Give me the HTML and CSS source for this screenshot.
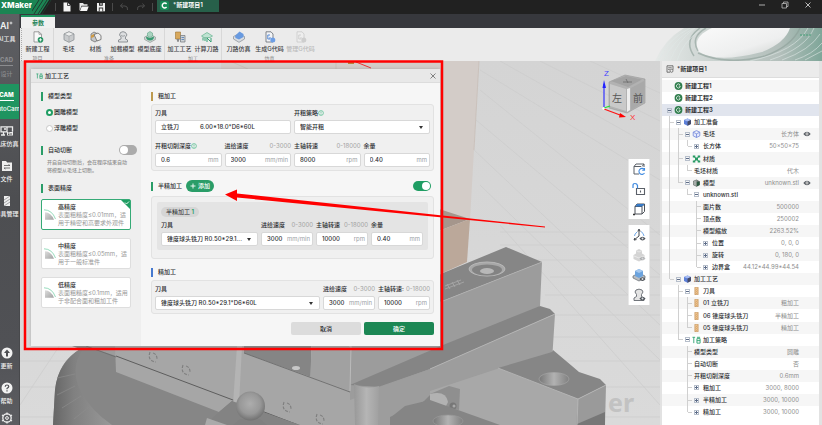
FILE: index.html
```html
<!DOCTYPE html>
<html lang="zh-CN">
<head>
<meta charset="utf-8">
<title>XMaker</title>
<link rel="stylesheet" href="styles.css">
</head>
<body>
<svg class="defs" aria-hidden="true">
  <symbol id="cube" viewBox="0 0 12 12"><path d="M6 .8 11 3v5.8L6 11.3 1 8.800V3z" fill="#c9cbcd" stroke="#8c9094" stroke-width=".8"/><path d="M6 .8 11 3 6 5.200 1 3z" fill="#eceded" stroke="#8c9094" stroke-width=".6"/><path d="M6 5.200v6" stroke="#9a9da0" stroke-width=".6"/></symbol>
  <symbol id="gproj" viewBox="0 0 8 8"><circle cx="4" cy="4" r="3.900" fill="#2f7d4c"/><path d="M5.600 2.900A2 2 0 1 0 5.600 5.100V4H4.200" fill="none" stroke="#e8f4ec" stroke-width=".8"/></symbol>
  <symbol id="bluecube" viewBox="0 0 8 8"><path d="M4 .5 7.500 2v4L4 7.800.5 6V2z" fill="#5c7fd8"/><path d="M4 .5 7.500 2 4 3.500.5 2z" fill="#a9bdf2"/><path d="M4 3.500 7.500 2v4L4 7.800z" fill="#454a66"/></symbol>
  <symbol id="wirecube" viewBox="0 0 8 8"><path d="M4 .6 7.300 2.200v3.700L4 7.500.7 5.900V2.200zM.7 2.200 4 3.800l3.300-1.600M4 3.800v3.700" fill="#e4e8fb" stroke="#7287db" stroke-width=".8"/></symbol>
  <symbol id="mat" viewBox="0 0 8 8"><path d="M.3.500h2.500v2H.3zM5.200.5h2.500v2H5.200zM.3 5.500h2.500v2H.3zM5.200 5.500h2.500v2H5.200zM2.500 2.500h3v3h-3z" fill="#279a63"/><path d="m1.500 1.500 5 5m0-5-5 5" stroke="#279a63"/></symbol>
  <symbol id="model" viewBox="0 0 8 8"><path d="M4 .5 7.500 2.500v3.500L4 7.800.5 6V2z" fill="#6d7471"/><path d="M4 3 7 2.500V6L4 7.500z" fill="#29583f"/><path d="M1 2.500 4 1v6L1 5.700z" fill="#a7adaa"/></symbol>
  <symbol id="tool" viewBox="0 0 8 8"><path d="M2.300.3h3.400v7.400H2.300z" fill="#eec38f" stroke="#b98345" stroke-width=".5"/><path d="m2.800 3.500 2.400-2m-2.400 4 2.400-2m-2.400 4 2.400-2" stroke="#c4935a" stroke-width=".5"/></symbol>
  <symbol id="strategy" viewBox="0 0 10 8"><path d="M.5 1h3M2 1v6.500M5.500 2.500h3.500v5H5.500zM5.500 4.700H9M5.500 1H9" fill="none" stroke="#2da371" stroke-width="1"/></symbol>
  <symbol id="eye" viewBox="0 0 8 6"><path d="M.3 3Q4-1.500 7.700 3 4 7.500.3 3z" fill="#555a60"/><circle cx="4" cy="3" r="1.400" fill="#fff"/><circle cx="4" cy="3" r=".7" fill="#333"/></symbol>
  <symbol id="badge-eye" viewBox="0 0 8 6"><path d="M.3 3Q4-1.500 7.700 3 4 7.500.3 3z" fill="#4d5258"/><circle cx="4" cy="3" r="1.200" fill="#dfe3e8"/></symbol>
  <symbol id="arc" viewBox="0 0 12 12"><path d="M1 3.200Q7 3.200 10 10.800H1z" fill="url(#arcfill)"/><path d="M0 .8Q8 .8 11.500 10" fill="none" stroke="#8ad7b4" stroke-width=".9"/></symbol>
  <symbol id="info" viewBox="0 0 6 6"><circle cx="3" cy="3" r="2.400" fill="none" stroke="#4dba8b" stroke-width=".7"/><path d="M3 1.500v2M3 4v.7" stroke="#4dba8b" stroke-width=".7"/></symbol>
  <defs>
    <linearGradient id="arcfill" x2="1" y2="1"><stop stop-color="#dedede"/><stop offset="1" stop-color="#a2a2a2"/></linearGradient>
  </defs>
</svg>

<div class="app">
  <header class="titlebar">
    <div class="brand"><span>XMaker</span>
      <svg viewBox="0 0 20 14"><path d="M0 0h17L8 14H0z" fill="#1b8553"/><path d="M7 0-2 14M11 0 2 14M15 0 6 14M19 0l-9 14" stroke="#1f3d30" stroke-width="1"/></svg>
    </div>
    <div class="quick">
      <button aria-label="新建"><svg viewBox="0 0 10 10"><path d="M1.500.5h4L8.500 3.500v6h-7z" fill="#f4f4f4"/><path d="M5.500.5v3h3" fill="none" stroke="#222" stroke-width=".8"/></svg></button>
      <button aria-label="打开"><svg viewBox="0 0 10 10"><path d="M.5 9V1h3.500l1 1.300h3.500v1.500h-6z" fill="#e8e8e8"/><path d="m2.700 4.600 7 0L8 9H1z" fill="#f6f6f6"/></svg></button>
      <button aria-label="保存"><svg viewBox="0 0 10 10"><path d="M1 1h8v8.300H1z" fill="#f0f0f0"/><path d="M3 1v2.700h3.800V1M2.800 9.300V5.600h4.400v3.700" fill="#333"/><path d="M4.500 1h1v2h-1zM3.700 6.500h2.600v2.800H3.700z" fill="#f0f0f0"/></svg></button>
    </div>
    <div class="quick dim">
      <button aria-label="撤销"><svg viewBox="0 0 10 10"><path d="M3.500 1.500 1.500 4l2.500 2M1.500 4h4.500q3 0 2.500 4" fill="none" stroke="#4c4c4c"/></svg></button>
      <button aria-label="重做"><svg viewBox="0 0 10 10"><path d="M6.500 1.500 8.500 4 6 6M8.500 4H4q-3 0-2.500 4" fill="none" stroke="#4c4c4c"/></svg></button>
    </div>
    <button class="doc-tab"><svg viewBox="0 0 10 10"><rect width="10" height="10" rx="2" fill="#168a55"/><path d="M7.300 3.300A2.700 2.700 0 1 0 7.300 6.700" fill="none" stroke="#fff" stroke-width="1.600"/></svg>*新建项目1</button>
    <div class="window-buttons">
      <button aria-label="最小化"><svg viewBox="0 0 8 8"><path d="M1 4h6" stroke="#bbb" stroke-width=".9"/></svg></button>
      <button aria-label="还原"><svg viewBox="0 0 8 8"><path d="M1 2.500h4.500V7H1zM2.500 2.500V1H7v4.500H5.500" fill="none" stroke="#bbb" stroke-width=".8"/></svg></button>
      <button aria-label="关闭"><svg viewBox="0 0 8 8"><path d="m1.500 1.500 5 5m0-5-5 5" stroke="#ccc" stroke-width=".9"/></svg></button>
    </div>
  </header>

  <div class="body">
    <nav class="rail">
      <div class="rail-inner">
        <a href="#" class="rail-item"><b class="ai">AI<svg viewBox="0 0 4 4"><path d="m2 0 .5 1.500L4 2l-1.500.5L2 4l-.5-1.500L0 2l1.500-.5z" fill="#eee"/></svg></b>AI工具</a>
        <a href="#" class="rail-item off"><b>CAD</b>设计</a>
        <a href="#" class="rail-item on"><b>CAM</b>AutoCam</a>
        <a href="#" class="rail-item"><svg viewBox="0 0 14 10"><path d="M1 .8h6v5H1zM7 .8h5.500v5M3.500 5.800V9M1 9h4M4 3h2" fill="none" stroke="#ededed" stroke-width="1.300"/><path d="M7 6h6v3.500H7z" fill="#ededed"/><path d="M8 7h1.500M8 8.500h1.500M11 7v2" stroke="#555"/></svg>机床仿真</a>
        <a href="#" class="rail-item"><svg viewBox="0 0 14 10"><path d="M2 0h4l1.200 1.500H12V10H2z" fill="#efefef"/><path d="M4 4.500h6l-1.500-1M10 7H4l1.500 1" fill="none" stroke="#555" stroke-width=".8"/></svg>文件</a>
        <a href="#" class="rail-item"><svg viewBox="0 0 14 10"><path d="M4 0h6v10H4z" fill="#efefef"/><path d="m4 4 6-4M4 7l6-4M4 10l6-4" stroke="#8a8b8e" stroke-width=".8"/></svg>刀具管理</a>
        <div class="rail-space"></div>
        <a href="#" class="rail-item low"><svg viewBox="0 0 14 12"><circle cx="7" cy="6" r="5.500" fill="#f2f2f2"/><path d="M7 2.500 10 6H8v3.500H6V6H4z" fill="#4e4f53"/></svg>更新</a>
        <a href="#" class="rail-item low"><svg viewBox="0 0 14 12"><circle cx="7" cy="6" r="5.500" fill="#f2f2f2"/><path d="M5.200 4.700Q5.300 3 7 3t1.800 1.600Q8.800 5.500 7 6.500v.8M7 8.300v1.200" fill="none" stroke="#4e4f53" stroke-width="1.200"/></svg>帮助</a>
        <a href="#" class="rail-item low last" aria-label="设置"><svg viewBox="0 0 14 12"><circle cx="7" cy="6" r="4.200" fill="none" stroke="#eee" stroke-width="1.300"/><circle cx="7" cy="6" r="1.400" fill="none" stroke="#eee"/><path d="M7 .5v2M7 9.500v2M2 3l1.700 1M12 3l-1.700 1M2 9l1.700-1M12 9l-1.700-1" stroke="#eee" stroke-width="1.300"/></svg></a>
      </div>
    </nav>

    <div class="work">
      <div class="tabs"><button class="tab">参数</button></div>
      <div class="ribbon">
        <div class="group"><div class="items">
          <button><svg viewBox="0 0 12 12"><path d="M2 .8h5l2.500 2.500V11H2z" fill="#f8f8f8" stroke="#888" stroke-width=".8"/><path d="M7 .8v2.500h2.500" fill="none" stroke="#888" stroke-width=".7"/><circle cx="8.500" cy="8.800" r="2.800" fill="#249462"/><path d="M8.500 7.200v3.200M6.900 8.800h3.200" stroke="#fff" stroke-width=".8"/></svg>新建工程</button>
        </div><span>项目</span></div>
        <div class="group"><div class="items">
          <button><svg><use href="#cube"/></svg>毛坯</button>
          <button><svg viewBox="0 0 12 12"><path d="M1 3 4 1l4 2v6l-3 2-4-2z" fill="#c5c7c9" stroke="#666" stroke-width=".7"/><path d="M4 3.500 8 2l3 2.500v4L7 10z" fill="#eee" stroke="#555" stroke-width=".7"/><path d="M1 4.500 4 3v3L1 7z" fill="#cf9a45"/></svg>材质</button>
          <button><svg viewBox="0 0 12 12"><path d="M3.500 1.500Q6-.2 8.500 1.500L10 4 8.500 6v2l2 1v2h-9V9L4 8V6L2.500 4z" fill="#dcdee0" stroke="#85898d" stroke-width=".9"/><path d="M4 4.500q2 1.500 4 0" fill="none" stroke="#85898d" stroke-width=".7"/></svg>加载模型</button>
          <button><svg viewBox="0 0 12 12"><path d="M.6 6 6 3.500 11.400 6v2.500L6 11.500.6 8.500z" fill="#d2d8d5" stroke="#7e8884" stroke-width=".6"/><path d="M2 5.500q0 4 4 4t4-4L6 7z" fill="#3a9a72"/><path d="M6 .5 8.500 2v3L6 6.500 3.500 5V2z" fill="#a9d3c0" stroke="#62a688" stroke-width=".6"/></svg>模型底座</button>
        </div><span>准备</span></div>
        <div class="group"><div class="items">
          <button><svg viewBox="0 0 12 12"><path d="M1.500 1h5v7h-5z" fill="#d8a85c" stroke="#9a7437" stroke-width=".6"/><path d="M2.500 8h3l-1 3h-1z" fill="#888"/><path d="M6.500 4.500h4.500V11H6.500z" fill="#cfd3d6" stroke="#6f7478" stroke-width=".7"/><path d="M7.500 6.500h2.500M7.500 8.500h2.500" stroke="#4a79b5" stroke-width=".8"/></svg>加工工艺</button>
          <button><svg viewBox="0 0 12 12"><path d="M.5 5 6 1.500 11.500 5 9 6.500H3z" fill="#bfe3d2" stroke="#63b18e" stroke-width=".7"/><path d="M2 6.500v3M4 7v3M6 11V7l4 4V7" fill="none" stroke="#35a274" stroke-width="1"/></svg>计算刀路</button>
        </div><span>加工</span></div>
        <div class="group wide"><div class="items">
          <button><svg viewBox="0 0 12 12"><path d="M.5 5.500 6 2.500l5.500 3v2.500L6 11.300.5 8z" fill="#d9dde2" stroke="#858b92" stroke-width=".7"/><path d="M2 5 6.500.5 10.500 3v3L6 8.500 2.500 7z" fill="#689ae0"/></svg>刀路仿真</button>
          <button><svg viewBox="0 0 12 12"><path d="M2 .8h5L9 3v8H2z" fill="#f2f4f7" stroke="#656b72" stroke-width=".8"/><path d="M6 4H3.800v4H6V6" fill="none" stroke="#4a7fd0" stroke-width=".9"/><circle cx="8.800" cy="9" r="2.500" fill="#6d9ee5"/></svg>生成G代码</button>
          <button disabled><svg viewBox="0 0 12 12"><path d="M2 .8h5L9 3v8H2z" fill="#eee" stroke="#c9c9c9" stroke-width=".8"/><path d="M6 4H3.800v4H6V6" fill="none" stroke="#ccc" stroke-width=".9"/><circle cx="8.800" cy="9" r="2.500" fill="#cecece"/></svg>管理G代码</button>
        </div><span>仿真</span></div>
        <svg class="swirl" viewBox="655 28 167 33" preserveAspectRatio="xMaxYMin slice">
          <defs><linearGradient id="sw" x2="1"><stop stop-color="#e6e9e8"/><stop offset=".4" stop-color="#c6cfcc"/><stop offset=".75" stop-color="#b3bfbb"/><stop offset="1" stop-color="#7fa699"/></linearGradient>
          <linearGradient id="sw2" x2="1" y2="1"><stop stop-color="#fafafa"/><stop offset=".6" stop-color="#eeefef"/><stop offset="1" stop-color="#c9cecc"/></linearGradient></defs>
          <path d="M655 61Q664 40 684 28H822V61z" fill="url(#sw)"/>
          <path d="M698 51Q692 37 712 28H790Q785 43 762 52 715 64 698 51z" fill="url(#sw2)"/>
          <path d="M698 51Q690 37 706 28M694 56Q683 40 700 28M800 28q-8 18-35 28-38 10-67-3" fill="none" stroke="#8c9e97" stroke-width="1.500" opacity=".6"/>
          <path d="M658 61q10-22 32-33M664 61q8-21 30-33M670 61q7-20 25-33M677 61q5-18 22-30M770 60q36-12 44-32M782 60q28-10 38-26M795 60q18-6 27-17M805 60l17-9M750 61q46-10 58-33" fill="none" stroke="#dfe8e5" stroke-width=".6"/>
          <path d="M800 35h12" stroke="#5fa586" stroke-width="1.500" stroke-dasharray="2 1"/>
        </svg>
      </div>

      <div class="content">
        <main class="viewport">
          <svg class="scene" viewBox="20 61 640 364" preserveAspectRatio="xMinYMin slice">
            <defs>
              <linearGradient id="bg" y2="1" x2="0"><stop stop-color="#d4d4d4"/><stop offset="1" stop-color="#dadada"/></linearGradient>
              <linearGradient id="cyl" x2="1"><stop stop-color="#989898"/><stop offset=".5" stop-color="#b5b5b5"/><stop offset="1" stop-color="#a0a0a0"/></linearGradient>
              <linearGradient id="side" x2="1"><stop stop-color="#666"/><stop offset=".35" stop-color="#808080"/><stop offset="1" stop-color="#999"/></linearGradient>
              <radialGradient id="ball" cx=".48" cy=".42" r=".6"><stop stop-color="#adadad"/><stop offset=".6" stop-color="#989898"/><stop offset="1" stop-color="#6e6e6e"/></radialGradient>
              <linearGradient id="hole" x2="1"><stop stop-color="#777"/><stop offset=".5" stop-color="#b2b2b2"/><stop offset="1" stop-color="#808080"/></linearGradient>
            </defs>
            <path d="M20 61h640v364H20z" fill="url(#bg)"/>
            <g fill="none" stroke="#cdcdcd" stroke-width=".8">
              <path d="M20 361h640M20 387h640M20 417h640M540 337h120M540 315h120M545 295h115M550 277h110M500 260h160M500 245h160M500 232h160M20 405 60 345M480 90l180 145M476 120l184 155M474 150l186 175M480 185l180 175M500 225l160 180M540 61l120 60M590 61l70 32M500 61l160 90M480 70l180 110"/>
            </g>
            <text x="608" y="412" class="watermark">er</text>
            <path d="M221 61H479L470 220 443 211V69H221z" fill="#d3ccc8"/>
            <path d="M232 62l16 7M336 61v8M479 61l-5 89" stroke="#c4b8b0" stroke-width=".6"/>
            <path d="M348 61h6v3h-6z" fill="#b9813b"/><path d="m356 62 15 6" stroke="#e33" stroke-width="1"/>
            <path d="M436 208 470 219 436 232z" fill="#a5968c"/><path d="M436 232 470 219 467 262 436 276z" fill="#bba89a"/>
            <path d="M53 425 55 390Q58 362 80 349L72 346H440V425z" fill="#868686"/>
            <path d="M53 425 55 390Q58 360 86 346L82 351Q70 368 80 390 90 410 112 425z" fill="url(#side)"/>
            <path d="m57 395 18-9M62 408l19-12M74 419l15-12M57 378l18-4" stroke="#8c8c8c" stroke-width=".7"/>
            <path d="M72 346h44v10l-30-10" fill="#9c9c9c"/>
            <path d="M115 346h235v46l40 33H300L232 401 219 412 116 372z" fill="#a6a6a6"/>
            <path d="m116 356 117 44 65 25" fill="none" stroke="#555" stroke-width=".9"/>
            <path d="M86 346 116 357" stroke="#666" stroke-width=".7"/>
            <path d="M244 353V346h67v31z" fill="#858585"/><path d="M312 346h38v45l-40-14z" fill="#a1a1a1"/>
            <path d="m244 353 106 39" stroke="#666" stroke-width=".8"/><ellipse cx="296" cy="368" rx="4" ry="2" fill="#c7c7c7"/>
            <path d="M237 346h5l-3 58h-6z" fill="#b4b4b4"/>
            <g fill="none" stroke="#808080" stroke-width="1.200" stroke-dasharray="3 1.500"><path d="M150 352q-3 9 6 10M153 353q4 1 4 6M183 365q-3 9 6 10M186 366q4 1 4 6M284 402q-3 9 6 10M287 403q4 1 4 6M317 414q-3 9 6 10M320 415q4 1 4 6"/></g>
            <path d="M219 412 232 401 300 425H205z" fill="#838383"/>
            <path d="M207 418l20 7h-22z" fill="#aaa"/>
            <path d="M240 419h20l7 6h-34z" fill="#808080"/><circle cx="250.500" cy="406" r="14.500" fill="url(#ball)"/>
            <path d="M443 273 506 247 542 262 430 306V279z" fill="#868686"/>
            <path d="M430 306 542 262 540 306 500 345 350 400V346H430z" fill="#9c9c9c"/>
            <path d="M443 301 542 262" stroke="#b2b2b2" stroke-width=".8"/>
            <path d="M350 385 443 345 540 306 550 309 555 314 430 369 378 387z" fill="#858585"/>
            <path d="M356 386 380 387 430 369 555 314 552 361 507 369 430 395 400 425H355z" fill="#9d9d9d"/>
            <path d="m430 369 125-55" stroke="#b4b4b4"/><path d="M354 384q12 6 25 2l-1 39h-23z" fill="url(#cyl)"/>
            <path d="M349 346h2l-1 45" fill="none" stroke="#bbb"/>
            <path d="M390 417 460 385 540 425H390z" fill="#868686"/>
            <path d="M430 391 500 368 578 399 577 425H485L430 400z" fill="#a8a8a8"/>
            <path d="M498 368 552 352 553 350 572 366 579 372 600 379 606 385 578 399z" fill="#868686"/>
            <path d="M578 399 606 385 605 425H576z" fill="#9a9a9a"/><path d="m577 424 28-12v13h-28z" fill="#777"/>
            <path d="m498 368 80 31-1 26M578 399l28-14" fill="none" stroke="#b9b9b9" stroke-width=".8"/>
            <path d="M430 394 449 386 460 389 459 410 430 405z" fill="#8f8f8f"/><path d="M430 394q16-4 18 8l-3 6-15-4z" fill="#b2b2b2"/>
            <circle cx="453" cy="406" r="3.500" fill="#777"/><circle cx="454" cy="406" r="1.500" fill="#aaa"/>
            <path d="M390 418 405 406 430 400 500 425H390z" fill="#858585"/>
            <ellipse cx="448" cy="421" rx="15" ry="6" fill="url(#hole)" stroke="#999" stroke-width=".7"/>
            <ellipse cx="554" cy="379" rx="15" ry="6.500" fill="url(#hole)" stroke="#aaa" stroke-width=".6"/>
            <ellipse cx="487" cy="269" rx="18" ry="7" fill="#a8a8a8" stroke="#b8b8b8" stroke-width="1"/><ellipse cx="487" cy="270" rx="15" ry="5.500" fill="#838383"/><ellipse cx="487" cy="271" rx="7" ry="3" fill="#b8b8b8"/>
            <path d="m445 289 19-7M445 286l16-6M450 289l-3-5M455 287l-3-5M460 285l-3-5" stroke="#a9a9a9" stroke-width=".8"/>
          </svg>

          <svg class="view-cube" viewBox="600 66 48 56">
            <path d="M609 82 625 75 645 79 645 103 627 113 609 108z" fill="#b2b2b2" stroke="#999" stroke-width=".6" stroke-linejoin="round"/>
            <path d="M611 81 626 76 642 79.500 628 87z" fill="#a3a3a3"/>
            <path d="M610 84 626 89V111L610 106z" fill="#c9c9c9"/><path d="M627 89 630 88V110L627 112z" fill="#eee"/>
            <path d="M631 88 644 81V102L631 110z" fill="#a9a9a9"/>
            <text x="612" y="102" class="face">左</text><text x="633" y="102" class="face">前</text>
            <path d="M623 82h9M626 79l2 4" stroke="#6a6a6a" stroke-width=".8"/>
            <path d="M604 107V84" stroke="#33f" stroke-width="1.200"/><path d="M602.500 88 604 80 606 88z" fill="#22f"/>
            <path d="m604 109 16 6" stroke="#f11" stroke-width="1.200"/><path d="m620 113 6 4-7 .5z" fill="#f00"/><path d="m604 108 6-2" stroke="#2d3" stroke-width="1.300"/><circle cx="603.500" cy="108.500" r="1.200" fill="#fff"/>
            <text x="604" y="76" class="axis-z">Z</text><text x="630" y="120" class="axis-x">X</text>
          </svg>

          <div class="floaters">
            <div class="floatbar">
              <button aria-label="旋转视图"><svg viewBox="0 0 14 14"><path d="M2 4.500 4 2h8v3M2 4.500h7M2 4.500V12h5M12 2 10 4.500" fill="none" stroke="#5b6068"/><path d="M12.300 7.500A3 3 0 1 0 12.500 11M12.500 6v2.300h-2.300" fill="none" stroke="#3f8ae0" stroke-width="1.100"/></svg></button>
              <button aria-label="锁定"><svg viewBox="0 0 14 14"><path d="M4.500 6.500h8v6h-8zM8.500 8.500v2" fill="none" stroke="#5b6068" stroke-width="1.100"/><path d="M1 6V3.500Q1 1.500 3 1.500t2.500 2v3" fill="none" stroke="#3f8ae0" stroke-width="1.200"/></svg></button>
              <button aria-label="视角"><svg viewBox="0 0 14 14"><path d="M3 4.500h7V12H3zM3 4.500 5 2h7.500v7.500L10 12M10 4.500 12.500 2" fill="none" stroke="#4c5158"/><path d="M3.500 4.500 5 2h7.500L10 4.500z" fill="#367ac7"/><path d="M1 12.500h2" stroke="#333" stroke-width="1.500"/></svg></button>
            </div>
            <div class="floatbar">
              <button aria-label="坐标显示"><svg viewBox="0 0 14 14"><path d="M7 8V2M5.800 3.500 7 1l1.200 2.500M7 8l-5 4M2 12l2.500-.4M2 12l.8-2" fill="none" stroke="#454a51"/><path d="M9 3.500Q11.500 5 12 8M5 4Q2.500 6 2.500 8" fill="none" stroke="#4a90e2" stroke-width=".8"/><use href="#badge-eye" x="7" y="8" width="7" height="5"/></svg></button>
              <button aria-label="毛坯显示" disabled><svg viewBox="0 0 14 14"><path d="M7 1 10 2.500v3L12.500 7v4L7 13.500 1.500 11V7L4 5.500v-3z" fill="#d4d4d4"/><path d="m4 2.500 3 1.500 3-1.500M2 8l5 2 5-2" fill="none" stroke="#eee" stroke-width=".8"/><use href="#badge-eye" x="7" y="8" width="7" height="5" opacity=".3"/></svg></button>
              <button aria-label="模型显示"><svg viewBox="0 0 14 14"><path d="M1 8 7 5l6 3v2L7 13l-6-3z" fill="#b9bdc2" stroke="#63686f" stroke-width=".7"/><path d="m7 1 4 2v5L7 10 3 8V3z" fill="#6ba3de"/><path d="m7 1 4 2L7 5 3 3z" fill="#a6c8ee"/><use href="#badge-eye" x="7" y="8.500" width="7" height="5"/></svg></button>
              <button aria-label="夹具显示"><svg viewBox="0 0 14 14"><path d="M4 2Q7 .3 10 2l1 2-1.500 2.500v2L12 10v2.500H2V10l2.500-1.500v-2L3 4z" fill="#e4e4e4" stroke="#62676d" stroke-width=".9"/><use href="#badge-eye" x="7" y="8" width="7" height="5"/></svg></button>
            </div>
          </div>

          <section class="dialog" role="dialog" aria-labelledby="dlg-title">
            <header class="dlg-head"><svg class="dlg-icon"><use href="#strategy"/></svg><h1 id="dlg-title">加工工艺</h1><button aria-label="关闭"><svg viewBox="0 0 8 8"><path d="m1.500 1.500 5 5m0-5-5 5" stroke="#666" stroke-width=".8"/></svg></button></header>
            <div class="dlg-body">
              <aside class="options">
                <h2 class="head">模型类型</h2>
                <label class="radio"><input type="radio" name="kind" checked>圆雕模型</label>
                <label class="radio"><input type="radio" name="kind">浮雕模型</label>
                <div class="head cut"><label for="cut">自动切断</label><input id="cut" class="switch" type="checkbox"></div>
                <p class="hint">开启自动切断后，会在程序结束自动<br>将模型从毛坯上切断。</p>
                <h2 class="head">表面精度</h2>
                <div class="cards">
                  <button class="card chosen"><svg><use href="#arc"/></svg><span><b>高精度</b>表面粗糙度≤0.01mm，适<br>用于精密和高要求外观件</span><svg class="tick" viewBox="0 0 9 9"><path d="M0 0h9v9z" fill="#1f9d63"/><path d="m4 2.500 1.500 1.500L8 1.500" fill="none" stroke="#fff" stroke-width=".9"/></svg></button>
                  <button class="card"><svg><use href="#arc"/></svg><span><b>中精度</b>表面粗糙度≤0.05mm，适<br>用于一般标准件</span></button>
                  <button class="card"><svg><use href="#arc"/></svg><span><b>低精度</b>表面粗糙度≤0.1mm，适用<br>于非配合面和粗加工件</span></button>
                </div>
              </aside>

              <form class="params">
                <h2 class="head tan">粗加工</h2>
                <div class="panel">
                  <div class="grid two">
                    <div class="field"><div class="cap"><label for="rt">刀具</label></div><button type="button" id="rt" class="box picker"><span>立铣刀</span><span>6.00*18.0*D6*60L</span></button></div>
                    <div class="field"><div class="cap"><label for="rs">开粗策略</label><svg><use href="#info"/></svg></div><div class="box drop"><select id="rs"><option>智能开粗</option></select></div></div>
                  </div>
                  <div class="grid four">
                    <div class="field"><div class="cap"><label for="rd">开粗切削深度</label><svg><use href="#info"/></svg></div><div class="box"><input id="rd" value="0.6"><span>mm</span></div></div>
                    <div class="field"><div class="cap"><label for="rf">进给速度</label><em>0-3000</em></div><div class="box"><input id="rf" value="3000"><span>mm/min</span></div></div>
                    <div class="field"><div class="cap"><label for="rr">主轴转速</label><em>0-18000</em></div><div class="box"><input id="rr" value="8000"><span>rpm</span></div></div>
                    <div class="field"><div class="cap"><label for="ra">余量</label></div><div class="box"><input id="ra" value="0.40"><span>mm</span></div></div>
                  </div>
                </div>

                <div class="head semi"><label for="semi">半精加工</label><button type="button" class="add"><svg viewBox="0 0 6 6"><path d="M3 .5v5M.5 3h5" stroke="#fff" stroke-width=".9"/></svg>添加</button><input id="semi" class="switch" type="checkbox" checked></div>
                <div class="panel outer">
                  <div class="inner">
                    <span class="chip">半精加工 <b>1</b></span>
                    <div class="grid semi-cols">
                      <div class="field"><div class="cap"><label for="st">刀具</label></div><div class="box drop"><select id="st"><option>锥度球头铣刀 R0.50*29.1...</option></select></div></div>
                      <div class="field"><div class="cap"><label for="sf">进给速度</label><em>0-3000</em></div><div class="box"><input id="sf" value="3000"><span>mm/min</span></div></div>
                      <div class="field"><div class="cap"><label for="sr">主轴转速</label><em>0-18000</em></div><div class="box"><input id="sr" value="10000"><span>rpm</span></div></div>
                      <div class="field"><div class="cap"><label for="sa">余量</label></div><div class="box"><input id="sa" value="0.40"><span>mm</span></div></div>
                    </div>
                  </div>
                </div>

                <h2 class="head blue">精加工</h2>
                <div class="panel">
                  <div class="grid fine-cols">
                    <div class="field"><div class="cap"><label for="ft">刀具</label></div><div class="box drop"><select id="ft"><option>锥度球头铣刀 R0.50*29.1*D6*60L</option></select></div></div>
                    <div class="field"><div class="cap"><label for="ff">进给速度</label><em>0-3000</em></div><div class="box"><input id="ff" value="3000"><span>mm/min</span></div></div>
                    <div class="field"><div class="cap"><label for="fr">主轴转速:</label><em>0-18000</em></div><div class="box"><input id="fr" value="10000"><span>rpm</span></div></div>
                  </div>
                </div>
                <div class="actions"><button type="button">取消</button><button type="button" class="primary">确定</button></div>
              </form>
            </div>
          </section>
        </main>

        <aside class="project">
          <h2><svg viewBox="0 0 8 8"><path d="M1 .8h6v4M4 7.200H1V.8M2.200 2.800h3.500M2.200 4.500h1.500" fill="none" stroke="#555" stroke-width=".8"/><circle cx="5.500" cy="5.800" r="1.500" fill="none" stroke="#555" stroke-width=".7"/></svg>*新建项目1</h2>
          <ul class="tree">
            <li class="top"><i></i><svg><use href="#gproj"/></svg><span>新建工程1</span></li>
            <li class="top"><i></i><svg><use href="#gproj"/></svg><span>新建工程2</span></li>
            <li class="top active"><i class="box-minus"></i><svg><use href="#gproj"/></svg><span>新建工程3</span></li>
            <li><i class="tee"></i><i class="box-minus"></i><svg><use href="#bluecube"/></svg><span>加工准备</span></li>
            <li><i class="bar"></i><i class="tee"></i><i class="box-minus"></i><svg><use href="#wirecube"/></svg><span>毛坯</span><em>长方体</em><svg class="eye"><use href="#eye"/></svg></li>
            <li><i class="bar"></i><i class="bar"></i><i class="end"></i><i class="box-plus"></i><span>长方体</span><em>50x50x75</em></li>
            <li><i class="bar"></i><i class="tee"></i><i class="box-minus"></i><svg><use href="#mat"/></svg><span>材质</span></li>
            <li><i class="bar"></i><i class="bar"></i><i class="end"></i><span>毛坯材质</span><em>代木</em></li>
            <li><i class="bar"></i><i class="end"></i><i class="box-minus"></i><svg><use href="#model"/></svg><span>模型</span><em>unknown.stl</em><svg class="eye"><use href="#eye"/></svg></li>
            <li><i class="bar"></i><i></i><i class="end"></i><i class="box-minus"></i><span>unknown.stl</span></li>
            <li><i class="bar"></i><i></i><i></i><i class="tee"></i><span>面片数</span><em>500000</em></li>
            <li><i class="bar"></i><i></i><i></i><i class="tee"></i><span>顶点数</span><em>250002</em></li>
            <li><i class="bar"></i><i></i><i></i><i class="tee"></i><span>模型缩放</span><em>2263.52%</em></li>
            <li><i class="bar"></i><i></i><i></i><i class="tee"></i><i class="box-plus"></i><span>位置</span><em>0, 0, 0</em></li>
            <li><i class="bar"></i><i></i><i></i><i class="tee"></i><i class="box-plus"></i><span>旋转</span><em>0, 180, 0</em></li>
            <li><i class="bar"></i><i></i><i></i><i class="end"></i><i class="box-plus"></i><span>边界盒</span><em>44.12*44.99*44.54</em></li>
            <li><i class="end"></i><i class="box-minus"></i><svg><use href="#bluecube"/></svg><span>加工工艺</span></li>
            <li><i></i><i class="tee"></i><i class="box-minus"></i><svg><use href="#tool"/></svg><span>刀具</span></li>
            <li><i></i><i class="bar"></i><i class="tee"></i><svg><use href="#tool"/></svg><span>01 立铣刀</span><em>粗加工</em></li>
            <li><i></i><i class="bar"></i><i class="tee"></i><svg><use href="#tool"/></svg><span>06 锥度球头铣刀</span><em>半精加工</em></li>
            <li><i></i><i class="bar"></i><i class="end"></i><svg><use href="#tool"/></svg><span>05 锥度球头铣刀</span><em>精加工</em></li>
            <li><i></i><i class="end"></i><i class="box-minus"></i><svg><use href="#strategy"/></svg><span>加工策略</span></li>
            <li><i></i><i></i><i class="tee"></i><span>模型类型</span><em>圆雕</em></li>
            <li><i></i><i></i><i class="tee"></i><span>自动切断</span><em>否</em></li>
            <li><i></i><i></i><i class="tee"></i><span>开粗切削深度</span><em>0.6mm</em></li>
            <li><i></i><i></i><i class="tee"></i><i class="box-plus"></i><span>粗加工</span><em>3000, 8000</em></li>
            <li><i></i><i></i><i class="tee"></i><i class="box-plus"></i><span>半精加工</span><em>3000, 10000</em></li>
            <li><i></i><i></i><i class="end"></i><i class="box-plus"></i><span>精加工</span><em>3000, 10000</em></li>
          </ul>
        </aside>
      </div>
    </div>
  </div>

  <svg class="callout" viewBox="0 0 822 425" preserveAspectRatio="xMinYMin meet" aria-hidden="true">
    <path d="M25 61.500H442V349H25z" fill="none" stroke="#f00" stroke-width="2.500"/>
    <path d="M225 194.500 237 189.500V193.500L545 226.500V227.500L237 197.500V201z" fill="#f00"/>
  </svg>
</div>
</body>
</html>
```
FILE: styles.css
```css
* { box-sizing: border-box; }

body {
  margin: 0;
  font: 6px/8px Inter, "Noto Sans CJK SC", sans-serif;
  color: #2b2d30;
  overflow: hidden;
}

button, input, select {
  font: inherit;
  color: inherit;
  margin: 0;
  padding: 0;
  border: 0;
  background: none;
  min-width: 0;
}

h1, h2, p, ul { margin: 0; padding: 0; font-size: inherit; font-weight: 500; }
em, i { font-style: normal; }
svg { display: block; flex: none; }
.defs { position: absolute; width: 0; height: 0; }

.app {
  position: relative;
  display: flex;
  flex-direction: column;
  height: 100vh;
}

/* Title bar */
.titlebar {
  flex: none;
  display: flex;
  align-items: center;
  height: 14px;
  background: #212121;
  color: #fff;
}
.brand { display: flex; align-items: center; height: 14px; width: 55px; }
.brand span {
  flex: none;
  height: 14px;
  padding: 0 0 4px 1px;
  background: #1b8553;
  font-size: 8px;
  line-height: 10px;
  font-weight: 800;
}
.brand svg { width: 20px; height: 14px; }
.quick {
  display: flex;
  gap: 7px;
  padding: 0 6px;
  border-left: 1px solid #4a4a4a;
  height: 8px;
  align-items: center;
}
.quick svg { width: 10px; height: 10px; }
.quick.dim { border-right: 1px solid #4a4a4a; }
.doc-tab {
  display: flex;
  align-items: center;
  align-self: stretch;
  gap: 4px;
  width: 62px;
  margin-left: 4px;
  padding: 0 3px 2px;
  background: #27604a;
  border-bottom: 2px solid #212121;
  font-weight: 600;
}
.doc-tab svg { width: 9px; height: 9px; }
.window-buttons { display: flex; gap: 15px; margin-left: auto; padding: 0 10px 4px; }
.window-buttons svg { width: 8px; height: 8px; }

.body { flex: 1; display: flex; min-height: 0; }

/* Left rail */
.rail {
  flex: none;
  width: 20px;
  overflow: hidden;
  background: linear-gradient(#5e5f63, #4d4e51 45%, #505155 80%, #5c5d61);
  border-right: 1px solid #48494c;
}
.rail-inner {
  display: flex;
  flex-direction: column;
  width: 29px;
  height: 100%;
  margin-left: -8px;
}
.rail-item {
  flex: none;
  display: flex;
  flex-direction: column;
  align-items: center;
  justify-content: center;
  gap: 4px;
  height: 35px;
  color: #f0f0f0;
  font-weight: 500;
  text-decoration: none;
  white-space: nowrap;
}
.rail-item svg { width: 14px; height: 10px; }
.rail-item b { height: 10px; border-bottom: 1px solid; line-height: 8px; font-weight: 800; }
.rail-item .ai { display: flex; border: 0; font-size: 9px; font-weight: 600; line-height: 10px; }
.rail-item .ai svg { width: 4px; height: 4px; }
.rail-item.off { color: #8b8c8f; }
.rail-item.on { background: #1f9460; color: #fff; }
.rail-item.low { gap: 3px; }
.rail-item.low svg { width: 14px; height: 12px; }
.rail-item.last { height: 14px; }
.rail-space { flex: 1; }

/* Ribbon */
.work { flex: 1; min-width: 0; display: flex; flex-direction: column; }
.tabs { flex: none; height: 14px; padding: 1px 0 0 1px; background: #37383d; }
.tab {
  display: block;
  width: 34px;
  height: 13px;
  background: #f0f0f0;
  border-top: 2px solid #1f9460;
  color: #1f8558;
  font-weight: 700;
}
.ribbon {
  flex: none;
  display: flex;
  height: 33px;
  overflow: hidden;
  padding-left: 1px;
  background: #ebebeb;
}
.group {
  flex: none;
  padding: 3px 2px 0;
  border-right: 1px solid #d8d8d8;
  text-align: center;
  color: #858585;
}
.group:first-child { border-left: 1px dotted #aaa; }
.group + .group { padding: 3px 1px 0; }
.group.wide { border-right: 0; }
.items { display: flex; }
.items button {
  width: 27px;
  height: 22px;
  display: flex;
  flex-direction: column;
  align-items: center;
  gap: 2px;
  color: #3f4144;
  font-weight: 500;
  white-space: nowrap;
}
.wide .items button { width: 31px; }
.items button:disabled { color: #bbb; }
.items svg { width: 12px; height: 12px; }
.group > span { display: block; margin-top: 1px; font-size: 5px; }
.swirl { width: 167px; height: 33px; margin-left: auto; }

.content { flex: 1; display: flex; min-height: 0; }

/* 3D view */
.viewport { position: relative; flex: 1; min-width: 0; background: #d7d7d7; }
.scene { position: absolute; inset: 0; width: 100%; height: 100%; }
.watermark { font: 700 25px "Noto Sans", sans-serif; fill: #c2c2c2; }
.view-cube { position: absolute; top: 5px; right: 12px; width: 48px; height: 56px; }
.face { font: 10px "Noto Sans CJK SC", sans-serif; fill: #555; }
.axis-z { font: 8px "Liberation Sans", sans-serif; fill: #44f; }
.axis-x { font: 8px "Liberation Sans", sans-serif; fill: #f33; }
.floaters {
  position: absolute;
  top: 98px;
  right: 10px;
  display: grid;
  gap: 6px;
}
.floatbar { width: 22px; background: #fff; border: 1px solid #e8e8e8; border-width: 0 1px; }
.floatbar button { display: grid; place-items: center; width: 20px; height: 20px; }
.floatbar svg { width: 14px; height: 14px; }

/* Dialog */
.dialog {
  position: absolute;
  top: 8px;
  left: 11px;
  width: 409px;
  background: #f6f6f6;
  box-shadow: 0 0 3px #8888;
}
.dlg-head {
  display: flex;
  align-items: center;
  gap: 2px;
  height: 14px;
  padding: 0 3px 0 5px;
  background: #e8e8e8;
  border-bottom: 1px solid #dcdcdc;
}
.dlg-icon { width: 7px; height: 6px; }
.dlg-head button { margin-left: auto; }
.dlg-head button svg { width: 8px; height: 8px; }
.dlg-body { display: flex; }

.head {
  display: flex;
  align-items: center;
  height: 12px;
  font-weight: 500;
}
.head::before {
  content: "";
  width: 2px;
  height: 9px;
  margin-right: 5px;
  background: #2a9d68;
}
.head.tan::before { background: #bd9a50; }
.head.blue::before { background: #4679cf; }

.options { flex: none; width: 110px; padding: 7px 4px 0 10px; background: #efefef; }
.radio { display: flex; align-items: center; gap: 1px; height: 8px; margin: 6px 0 0 5px; font-weight: 500; }
.radio + .radio { margin-top: 8px; }
.radio input {
  appearance: none;
  width: 7px;
  height: 7px;
  border: 1px solid #c8c8c8;
  border-radius: 50%;
  background: #fff;
}
.radio input:checked { border: 2px solid #1f9d63; }
.head.cut { margin-top: 12px; }
.switch {
  appearance: none;
  flex: none;
  width: 18px;
  height: 10px;
  margin-left: auto;
  padding: 1px;
  border-radius: 5px;
  background: #ababab;
}
.switch::before { content: ""; display: block; width: 8px; height: 8px; border-radius: 50%; background: #fff; }
.switch:checked { background: #1f9d63; }
.switch:checked::before { margin-left: auto; }
.hint { margin: 2px 0 8px 6px; font-size: 5px; color: #8f8f8f; white-space: nowrap; }
.cards { display: grid; gap: 8px; margin: 5px 6px 0 0; }
.card {
  position: relative;
  display: flex;
  align-items: center;
  gap: 2px;
  height: 31px;
  padding: 0 2px;
  border: 1px solid #dedede;
  border-radius: 2px;
  background: #fff;
  color: #999;
  text-align: left;
  white-space: nowrap;
}
.card.chosen { border-color: #35aa76; }
.card > svg { width: 12px; height: 12px; }
.card b { display: block; color: #333; font-weight: 500; }
.card .tick { position: absolute; top: 0; right: 0; width: 9px; height: 9px; }

.params { flex: 1; min-width: 0; padding: 7px 6px 11px 10px; }
.panel {
  margin: 2px 0 7px;
  padding: 3px;
  border: 1px solid #e2e2e2;
  border-radius: 3px;
  background: #f0f0f0;
}
.grid { display: grid; gap: 3px; }
.two { grid-template-columns: 1fr 1fr; margin-bottom: 7px; }
.four { grid-template-columns: repeat(4, 1fr); }
.semi-cols { grid-template-columns: 1fr 52px 52px 52px; margin-top: 3px; }
.fine-cols { grid-template-columns: 1fr 52px 52px; }
.field { min-width: 0; }
.cap {
  display: flex;
  align-items: center;
  height: 9px;
  margin-bottom: 3px;
  font-weight: 500;
  white-space: nowrap;
}
.cap svg { width: 6px; height: 6px; }
.cap em { margin-left: auto; color: #a2a2a2; font-weight: 400; }
.box {
  display: flex;
  align-items: center;
  width: 100%;
  height: 14px;
  padding: 0 2px 0 5px;
  border: 1px solid #d8d8d8;
  border-radius: 2px;
  background: #fff;
  font-weight: 500;
  white-space: nowrap;
}
.box input { flex: 1; width: 0; height: 8px; }
.box > span { color: #9aa0a5; font-weight: 400; }
.picker { text-align: left; }
.picker > span { width: 39px; color: #2b2d30; font-weight: 500; }
.drop select { appearance: none; flex: 1; width: 0; height: 12px; line-height: 12px; }
.drop::after {
  content: "";
  margin-right: 4px;
  border: 2px solid transparent;
  border-top: 3px solid #333;
  border-bottom: 0;
}
.head.semi { height: 16px; padding-right: 3px; }
.add {
  display: flex;
  align-items: center;
  justify-content: center;
  gap: 2px;
  width: 28px;
  height: 12px;
  margin-left: 4px;
  border-radius: 6px;
  background: #2a9d68;
  color: #fff;
}
.add svg { width: 6px; height: 6px; }
.outer { padding: 5px 5px 8px; }
.inner { padding: 5px 5px 4px 4px; border-radius: 2px; background: #e4e4e4; }
.chip {
  display: block;
  width: 38px;
  height: 10px;
  border-radius: 5px;
  background: #d5d5d5;
  line-height: 10px;
  text-align: center;
}
.chip b { color: #1f9d63; font-weight: 600; }
.actions { display: flex; justify-content: flex-end; gap: 3px; margin-top: 8px; }
.actions button { width: 70px; height: 13px; border-radius: 2px; background: #dcdcdc; font-weight: 500; }
.actions .primary { background: #1c8754; color: #fff; }

/* Project tree */
.project {
  flex: none;
  width: 162px;
  display: flex;
  flex-direction: column;
  background: #fff;
  border-left: 2px solid #e2e2e2;
  border-right: 3px solid #e2e2e2;
}
.project h2 {
  flex: none;
  display: flex;
  align-items: center;
  gap: 3px;
  height: 17px;
  padding-left: 4px;
  background: #ebebeb;
  border-bottom: 1px solid #ddd;
  font-weight: 600;
}
.project h2 svg { width: 8px; height: 8px; }
.tree { flex: 1; display: flex; flex-direction: column; padding: 2px 0 7px; list-style: none; }
.tree li { flex: 1; display: flex; align-items: center; min-height: 12px; padding: 0 20px 0 3px; font-weight: 500; }
.tree li:nth-child(odd) { background: #f6f6f6; }
.tree li.active { background: #e1e5ee; }
.tree .top { font-weight: 600; }
.tree li > span { padding-left: 2px; white-space: nowrap; }
.tree em { margin-left: auto; color: #8e8e8e; font-weight: 400; white-space: nowrap; }
.tree svg { width: 9px; height: 8px; }
.tree .eye { width: 8px; height: 6px; margin: 0 -12px 0 4px; }
.tree i { flex: none; width: 9px; align-self: stretch; background: no-repeat; }
.tree .bar { background-image: linear-gradient(#d0d0d0, #d0d0d0); background-size: 1px 100%; background-position: 4px 0; }
.tree .tee {
  background-image: linear-gradient(#d0d0d0, #d0d0d0), linear-gradient(#d0d0d0, #d0d0d0);
  background-size: 1px 100%, 4px 1px;
  background-position: 4px 0, 5px 50%;
}
.tree .end {
  background-image: linear-gradient(#d0d0d0, #d0d0d0), linear-gradient(#d0d0d0, #d0d0d0);
  background-size: 1px 50%, 4px 1px;
  background-position: 4px 0, 5px 50%;
}
.tree .box-minus, .tree .box-plus {
  align-self: center;
  width: 5px;
  height: 5px;
  margin: 0 2px;
  border: 1px solid #b7bfcb;
  background-image: linear-gradient(#5d6c88, #5d6c88);
  background-size: 3px 1px;
  background-position: center;
}
.tree .box-plus {
  background-image: linear-gradient(#5d6c88, #5d6c88), linear-gradient(#5d6c88, #5d6c88);
  background-size: 3px 1px, 1px 3px;
}

.callout { position: absolute; inset: 0; width: 100%; height: 100%; pointer-events: none; }
```
